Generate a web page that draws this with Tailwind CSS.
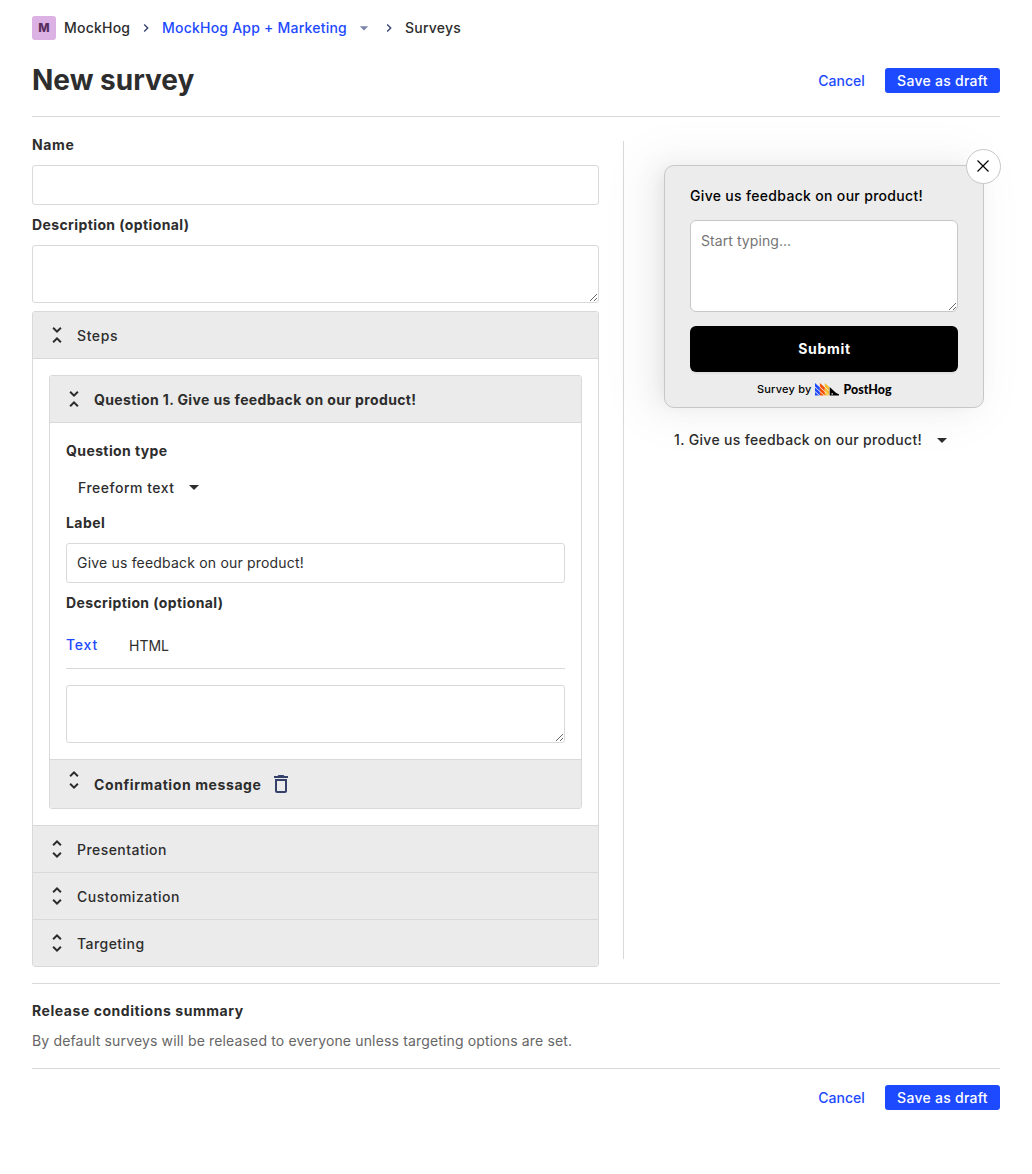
<!DOCTYPE html>
<html lang="en">
<head>
<meta charset="utf-8">
<title>New survey</title>
<script src="https://cdn.jsdelivr.net/npm/@tailwindcss/browser@4"></script>
</head>
<body class="bg-white font-['Inter',sans-serif] text-sm leading-5 text-[#2d2d2d]">
<svg class="hidden">
  <symbol id="collapse" viewBox="0 0 24 24"><path fill="currentColor" d="M16.59 5.41 15.17 4 12 7.17 8.83 4 7.41 5.41 12 10zM7.41 18.59 8.83 20 12 16.83 15.17 20l1.42-1.41L12 14z"/></symbol>
  <symbol id="expand" viewBox="0 0 24 24"><path fill="currentColor" d="M12 5.83 15.17 9l1.41-1.41L12 3 7.41 7.59 8.83 9zM12 18.17 8.83 15l-1.41 1.41L12 21l4.59-4.59L15.17 15z"/></symbol>
  <symbol id="chevron" viewBox="0 0 24 24"><path fill="currentColor" d="M8.59 16.59 13.17 12 8.59 7.41 10 6l6 6-6 6z"/></symbol>
  <symbol id="caret" viewBox="0 0 24 24"><path fill="currentColor" d="M7 10l5 5 5-5z"/></symbol>
</svg>
<main class="flex h-[1174px] flex-col px-8">
  <nav class="mt-4 flex h-6 items-center font-medium tracking-[0.22px]">
    <span class="mr-2 flex size-6 items-center justify-center rounded-[3px] bg-[#dcb1e3] text-xs font-extrabold tracking-normal text-[#572e5e]">M</span>
    <span class="w-[66px] whitespace-nowrap">MockHog</span>
    <svg class="mx-2 size-4 text-[#35416b]"><use href="#chevron"/></svg>
    <span class="w-[185px] whitespace-nowrap text-[#1d4aff]">MockHog App + Marketing</span>
    <svg class="ml-[7px] size-5 text-[#7b84a8]"><use href="#caret"/></svg>
    <svg class="mr-2 ml-[7px] size-4 text-[#35416b]"><use href="#chevron"/></svg>
    <span>Surveys</span>
  </nav>

  <header class="mt-5 flex h-[41px] items-center justify-between">
    <h1 class="-mt-px text-[28px] leading-10 font-bold">New survey</h1>
    <div class="flex items-center font-medium">
      <button class="mr-5 w-[47px] whitespace-nowrap text-[#1d4aff]">Cancel</button>
      <button class="h-[25px] w-[115px] whitespace-nowrap rounded-[3px] bg-[#1d4aff] tracking-[0.27px] text-white">Save as draft</button>
    </div>
  </header>
  <hr class="mt-[15px] border-[#d9d9d9]">

  <div class="mt-6 flex h-[826px] shrink-0">
    <section class="flex w-[567px] shrink-0 flex-col">
      <label class="-mt-1.5 leading-5 font-bold tracking-[0.6px]">Name</label>
      <input class="mt-2.5 h-10 w-full shrink-0 rounded-[3px] border border-[#d9d9d9] px-2.5">
      <label class="mt-2.5 font-bold tracking-[0.39px]">Description (optional)</label>
      <textarea class="mt-2.5 h-[58px] w-full shrink-0 resize-y rounded-[3px] border border-[#d9d9d9] px-2.5"></textarea>

      <div class="mt-2 h-[656px] shrink-0 overflow-hidden rounded-[3px] border border-[#d9d9d9]">
        <div class="flex h-[46px] items-center bg-[#ebebeb] px-3 font-medium"><svg class="mr-2 size-6"><use href="#collapse"/></svg><span class="mt-0.5 tracking-[0.6px]">Steps</span></div>
        <div class="h-[467px] border-t border-[#d9d9d9] p-4">
          <div class="h-[434px] overflow-hidden rounded-[3px] border border-[#d9d9d9]">
            <div class="flex h-[46px] items-center bg-[#ebebeb] px-3 font-bold"><svg class="mr-2 size-6"><use href="#collapse"/></svg><span class="mt-0.5 tracking-[0.38px]">Question 1. Give us feedback on our product!</span></div>
            <div class="flex h-[337px] flex-col border-t border-[#d9d9d9] px-4 pt-[18px]">
              <label class="font-bold tracking-[0.4px]">Question type</label>
              <button class="mt-[7px] flex h-10 items-center pl-3 font-medium"><span class="w-[98px] whitespace-nowrap text-left tracking-[0.5px]">Freeform text</span><svg class="-mt-0.5 ml-1.5 size-6"><use href="#caret"/></svg></button>
              <label class="mt-[5px] font-bold tracking-[0.45px]">Label</label>
              <input value="Give us feedback on our product!" class="mt-2.5 h-10 w-full shrink-0 rounded-[3px] border border-[#d9d9d9] px-2.5 pb-0.5 tracking-[0.19px]">
              <label class="mt-2.5 font-bold tracking-[0.39px]">Description (optional)</label>
              <div class="flex h-14 items-center gap-8 border-b border-[#d9d9d9] pt-[9px]"><span class="-mt-px w-[31px] font-medium tracking-[0.8px] text-[#1d4aff]">Text</span><span class="mt-px">HTML</span></div>
              <textarea class="mt-4 h-[58px] w-full shrink-0 resize-y rounded-[3px] border border-[#d9d9d9] px-2.5"></textarea>
            </div>
            <div class="flex h-[49px] border-t border-[#d9d9d9] bg-[#ebebeb] px-3 font-bold"><svg class="mt-2 mr-2 size-6"><use href="#expand"/></svg><span class="mt-[15px] w-[167px] whitespace-nowrap tracking-[0.6px]">Confirmation message</span>
              <svg class="mt-3 ml-2 size-6 text-[#35416b]" viewBox="0 0 24 24"><path fill="currentColor" d="M19 4h-3.500l-1-1h-5l-1 1H5v2h14zM6 7v12c0 1.100.9 2 2 2h8c1.100 0 2-.9 2-2V7zm2 2h8v10H8z"/></svg>
            </div>
          </div>
        </div>
        <div class="flex h-[47px] items-center border-t border-[#d9d9d9] bg-[#ebebeb] px-3 font-medium"><svg class="mr-2 size-6"><use href="#expand"/></svg><span class="mt-0.5 tracking-[0.45px]">Presentation</span></div>
        <div class="flex h-[47px] items-center border-t border-[#d9d9d9] bg-[#ebebeb] px-3 font-medium"><svg class="mr-2 size-6"><use href="#expand"/></svg><span class="mt-0.5 tracking-[0.52px]">Customization</span></div>
        <div class="flex h-[47px] items-center border-t border-[#d9d9d9] bg-[#ebebeb] px-3 font-medium"><svg class="mr-2 size-6"><use href="#expand"/></svg><span class="mt-0.5 tracking-[0.45px]">Targeting</span></div>
      </div>
    </section>

    <div class="ml-6 h-[818px] w-px bg-[#d9d9d9]"></div>

    <aside class="ml-10 w-80 pt-6">
      <div class="relative h-[243px] rounded-[10px] border border-[#c9c6c6] bg-[#ececec] px-[25px] pt-5 text-black shadow-[-6px_0_16px_-8px_rgb(0_0_0/8%),-9px_0_28px_0_rgb(0_0_0/5%),-12px_0_48px_16px_rgb(0_0_0/3%)]">
        <button class="absolute -top-[17.5px] -right-[17.5px] flex size-[35px] items-center justify-center rounded-full border border-[#c9c6c6] bg-white"><svg class="size-3" viewBox="0 0 12 12" fill="none" stroke="#000" stroke-width="1.2"><path d="M.5.5l11 11M11.500.5l-11 11"/></svg></button>
        <p class="font-medium tracking-[0.32px]">Give us feedback on our product!</p>
        <textarea placeholder="Start typing..." class="mt-3.5 block h-[92px] w-full rounded-md border border-[#c9c6c6] bg-white px-2.5 py-2.5 tracking-[0.07px] placeholder:text-[#757575]"></textarea>
        <button class="mt-3.5 block h-[46px] w-full rounded-md bg-black pl-px font-bold tracking-[0.7px] text-white shadow-[0_2px_0_rgb(0_0_0/4.5%)]">Submit</button>
        <div class="mt-[9px] flex items-center justify-center pl-px text-[11px] leading-4 font-medium"><span class="w-[54px] whitespace-nowrap tracking-[0.2px]">Survey by</span>
          <svg class="ml-1 h-4 w-[77px]" viewBox="0 0 77 16">
            <g transform="translate(0 1.100) scale(.49 .45)">
              <path fill="#1d4aff" d="M0 22l8 8H0zM0 12l10 10v8L0 20zM0 2l10 10v8L0 10z"/>
              <path fill="#f54e00" d="M10 22l8 8h-8zM10 12l10 10v8L10 20zM10 2l10 10v8L10 10z"/>
              <path fill="#f9bd2b" d="M20 22l8 8h-8zM20 12l9 9v8l-9-9zM20 2l9 9v8l-9-9z"/>
              <path fill="#000" fill-rule="evenodd" d="M30 11l12 12c2 2 5 3 7 4v3H30zM35 24.500a1.600 1.600 0 1 0 .1 0z"/>
            </g>
            <text x="28.500" y="12.500" textLength="48" lengthAdjust="spacingAndGlyphs" class="font-['Lato',sans-serif] text-[12.5px] font-black">PostHog</text>
          </svg>
        </div>
      </div>
      <button class="mt-3 flex h-10 items-center pl-2.5 font-medium"><span class="w-[248px] whitespace-nowrap text-left tracking-[0.33px]">1. Give us feedback on our product!</span><svg class="ml-2 size-6"><use href="#caret"/></svg></button>
    </aside>
  </div>

  <hr class="mt-4 border-[#d9d9d9]">
  <h3 class="mt-[17px] font-bold tracking-[0.55px]">Release conditions summary</h3>
  <p class="mt-2.5 tracking-[0.15px] text-[#666]">By default surveys will be released to everyone unless targeting options are set.</p>
  <hr class="mt-[17px] border-[#d9d9d9]">
  <footer class="mt-4 flex items-center justify-end font-medium">
    <button class="mr-5 w-[47px] whitespace-nowrap text-[#1d4aff]">Cancel</button>
    <button class="h-[25px] w-[115px] whitespace-nowrap rounded-[3px] bg-[#1d4aff] tracking-[0.27px] text-white">Save as draft</button>
  </footer>
</main>
</body>
</html>
